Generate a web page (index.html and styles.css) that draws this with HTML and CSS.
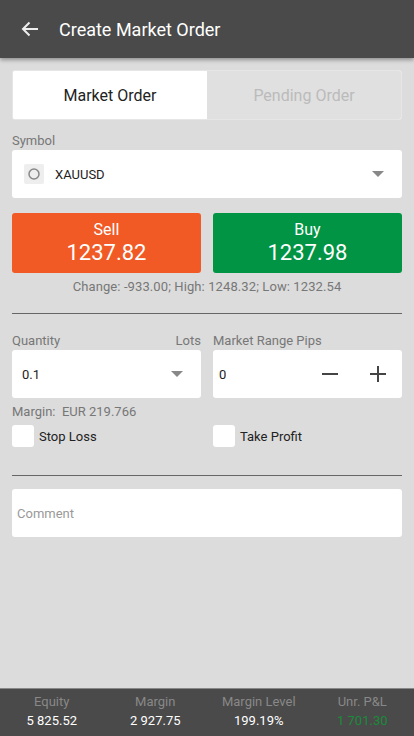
FILE: index.html
```html
<!DOCTYPE html>
<html>
<head>
  <title>Create Market Order</title>
  <link rel="stylesheet" href="styles.css">
</head>
<body>
  <div class="app">
    <header class="topbar">
      <svg class="back" width="18" height="16" viewBox="0 0 18 16">
        <path d="M17 8H2M8.5 1.5L2 8l6.5 6.5" fill="none" stroke="#eee" stroke-width="2"/>
      </svg>
      <h1>Create Market Order</h1>
    </header>

    <main class="content">
      <div class="tabs">
        <div class="tab active">Market Order</div>
        <div class="tab">Pending Order</div>
      </div>

      <label class="label">Symbol</label>
      <div class="field symbol">
        <span class="sym-icon">
          <svg width="12" height="12" viewBox="0 0 12 12"><circle cx="6" cy="6" r="5" fill="none" stroke="#888" stroke-width="1.5"/></svg>
        </span>
        <span class="sym-name">XAUUSD</span>
        <span class="caret"></span>
      </div>

      <div class="trade">
        <div class="trade-btn sell">
          <span class="side">Sell</span>
          <span class="price">1237.82</span>
        </div>
        <div class="trade-btn buy">
          <span class="side">Buy</span>
          <span class="price">1237.98</span>
        </div>
      </div>
      <div class="stats">Change: -933.00; High: 1248.32; Low: 1232.54</div>

      <hr class="divider">

      <div class="cols">
        <div class="col">
          <div class="label row"><span>Quantity</span><span>Lots</span></div>
          <div class="field qty">
            <span>0.1</span>
            <span class="caret"></span>
          </div>
          <div class="margin">Margin:&nbsp; EUR 219.766</div>
          <div class="check"><span class="box"></span>Stop Loss</div>
        </div>
        <div class="col">
          <div class="label">Market Range Pips</div>
          <div class="field pips">
            <span class="pips-val">0</span>
            <svg width="16" height="16" viewBox="0 0 16 16"><path d="M0 8h16" stroke="#444" stroke-width="2"/></svg>
            <svg width="16" height="16" viewBox="0 0 16 16"><path d="M0 8h16M8 0v16" stroke="#444" stroke-width="2"/></svg>
          </div>
          <div class="margin"></div>
          <div class="check"><span class="box"></span>Take Profit</div>
        </div>
      </div>

      <hr class="divider second">

      <div class="field comment">Comment</div>
    </main>

    <footer class="summary">
      <div class="cell"><span class="k">Equity</span><span class="v">5 825.52</span></div>
      <div class="cell"><span class="k">Margin</span><span class="v">2 927.75</span></div>
      <div class="cell"><span class="k">Margin Level</span><span class="v">199.19%</span></div>
      <div class="cell"><span class="k">Unr. P&amp;L</span><span class="v pos">1 701.30</span></div>
    </footer>
  </div>
</body>
</html>
```

FILE: styles.css
```css
* {
  box-sizing: border-box;
}
body {
  margin: 0;
  background: #dcdcdc;
  font-family: Roboto, 'Noto Sans', sans-serif;
  color: #222;
}
.app {
  height: 736px;
  display: flex;
  flex-direction: column;
}
.topbar {
  height: 58px;
  background: #4a4a4a;
  display: flex;
  align-items: center;
  padding-left: 21px;
  box-shadow: 0 2px 4px rgba(0,0,0,0.35);
  position: relative;
  z-index: 1;
}
.topbar h1 {
  margin: 0 0 0 20px;
  font-size: 18px;
  font-weight: normal;
  color: #fff;
}
.content {
  flex: 1;
  padding: 12px 12px 0;
}
.tabs {
  display: flex;
  height: 50px;
  border: 1px solid #e6e6e6;
  border-radius: 3px;
  overflow: hidden;
  background: #fff;
}
.tab {
  flex: 1;
  display: flex;
  align-items: center;
  justify-content: center;
  font-size: 16px;
  color: #bbb;
  background: #e0e0e0;
}
.tab.active {
  background: #fff;
  color: #222;
}
.label {
  display: block;
  font-size: 13px;
  color: #777;
  margin: 13px 0 1px;
  line-height: 16px;
}
.label.row {
  display: flex;
  justify-content: space-between;
}
.field {
  background: #fff;
  border-radius: 3px;
  height: 48px;
  display: flex;
  align-items: center;
  font-size: 13px;
}
.symbol {
  padding: 0 18px 0 12px;
}
.sym-icon {
  width: 20px;
  height: 20px;
  background: #eee;
  border-radius: 2px;
  display: flex;
  align-items: center;
  justify-content: center;
}
.sym-name {
  margin-left: 11px;
  flex: 1;
}
.caret {
  width: 0;
  height: 0;
  border-left: 6px solid transparent;
  border-right: 6px solid transparent;
  border-top: 6px solid #888;
}
.trade {
  display: flex;
  gap: 12px;
  margin-top: 15px;
}
.trade-btn {
  flex: 1;
  height: 60px;
  border-radius: 3px;
  color: #fff;
  display: flex;
  flex-direction: column;
  align-items: center;
  justify-content: center;
}
.sell {
  background: #f15a24;
}
.buy {
  background: #009444;
}
.side {
  font-size: 16px;
  line-height: 20px;
}
.price {
  font-size: 22px;
  line-height: 26px;
}
.stats {
  text-align: center;
  font-size: 13px;
  color: #777;
  margin-top: 6px;
  letter-spacing: 0.1px;
}
.divider {
  border: none;
  border-top: 1px solid #666;
  margin: 19px 0 0;
}
.divider.second {
  margin-top: 28px;
}
.cols {
  display: flex;
  gap: 12px;
}
.col {
  flex: 1;
}
.cols .label {
  margin-top: 19px;
}
.qty {
  padding: 0 18px 0 10px;
  justify-content: space-between;
}
.pips {
  padding: 0 16px 0 6px;
  gap: 32px;
}
.pips-val {
  flex: 1;
}
.margin {
  font-size: 13px;
  color: #777;
  height: 16px;
  margin-top: 6px;
}
.check {
  display: flex;
  align-items: center;
  font-size: 13px;
  margin-top: 5px;
}
.box {
  width: 22px;
  height: 22px;
  background: #fff;
  border-radius: 3px;
  margin-right: 5px;
}
.comment {
  margin-top: 13px;
  padding-left: 5px;
  color: #999;
}
.summary {
  height: 48px;
  background: #4a4a4a;
  border-top: 1px solid #888;
  display: flex;
  align-items: center;
  padding: 0 0 4px;
}
.cell {
  flex: 1;
  display: flex;
  flex-direction: column;
  align-items: center;
  font-size: 13px;
  line-height: 19px;
}
.k {
  color: #888;
}
.v {
  color: #fff;
}
.v.pos {
  color: #1b8a3a;
}
```
